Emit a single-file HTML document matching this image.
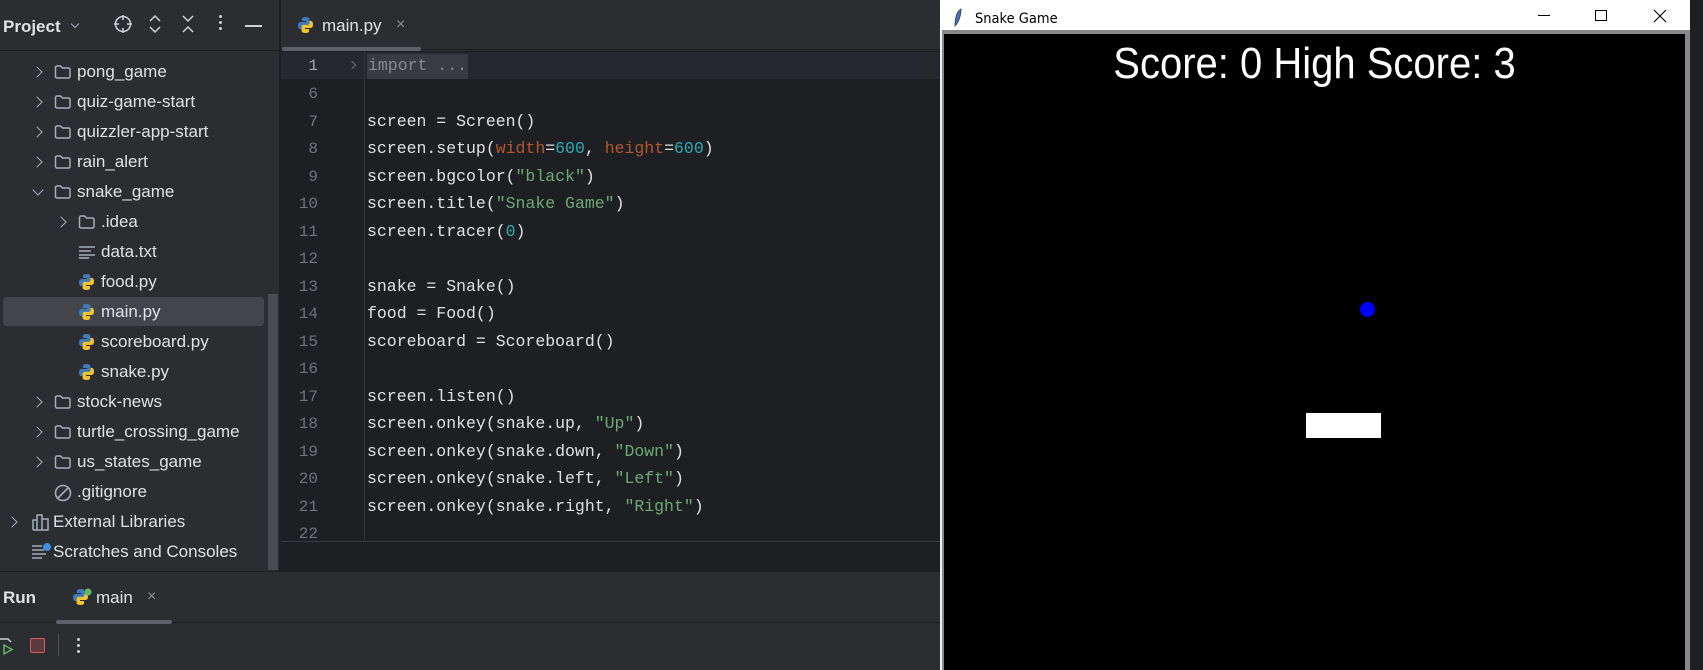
<!DOCTYPE html>
<html><head><meta charset="utf-8"><style>
*{margin:0;padding:0;box-sizing:border-box}
body{width:1703px;height:670px;overflow:hidden;background:#2b2d30;position:relative;font-family:"Liberation Sans",sans-serif;color:#dfe1e5}
.a{position:absolute}
.t{position:absolute;font-size:17px;white-space:nowrap;line-height:20px}
.mono{font-family:"Liberation Mono",monospace;font-size:16.5px;white-space:pre;position:absolute;line-height:20px}
.ln{position:absolute;width:50px;text-align:right;left:268px;font-family:"Liberation Mono",monospace;font-size:16px;color:#6f737a;line-height:20px}
.chev{position:absolute;width:8px;height:8px;border-right:1.6px solid #a8adbd;border-bottom:1.6px solid #a8adbd}
.r{transform:rotate(-45deg)}.d{transform:rotate(45deg)}
.fold{position:absolute;width:17px;height:15px}
.o{color:#cf8e6d}.s{color:#6aab73}.n{color:#2aacb8}.p{color:#b3572f}
</style></head><body>
<svg width="0" height="0" style="position:absolute"><defs>
<g id="py"><path d="M8.5 1C4.5 1 5 3 5 3v2h4v1H3.5S1 5.8 1 9.5s2.2 3.6 2.2 3.6H4.5v-1.8s-.1-2.2 2.2-2.2h3.6s2.1 0 2.1-2.1V3.1S12.7 1 8.5 1z" fill="#3e7bb8"/><path d="M8.5 17c4 0 3.5-2 3.5-2v-2H8v-1h5.5s2.5.2 2.5-3.5-2.2-3.6-2.2-3.6h-1.3v1.8s.1 2.2-2.2 2.2H6.7s-2.1 0-2.1 2.1v3.9S4.3 17 8.5 17z" fill="#f4c430"/></g>
<g id="fd"><path d="M1.5 3.5a1.5 1.5 0 0 1 1.5-1.5h3.5l2 2h6a1.5 1.5 0 0 1 1.5 1.5v7a1.5 1.5 0 0 1-1.5 1.5H3a1.5 1.5 0 0 1-1.5-1.5z" fill="none" stroke="#a8adbd" stroke-width="1.5"/></g>
</defs></svg>
<!-- sidebar -->
<div class="a" style="left:0;top:0;width:279px;height:572px;background:#2b2d30;border-bottom:1px solid #1e1f22"></div>
<div class="a" style="left:0;top:50px;width:279px;height:1px;background:#1e1f22"></div>
<div class="a" style="left:279px;top:0;width:2px;height:572px;background:#1e1f22"></div>
<div class="t" style="left:3px;top:17px;font-weight:bold;font-size:17px">Project</div>
<div class="chev d" style="left:72px;top:21px;width:6px;height:6px;border-width:1.3px"></div>
<svg class="a" style="left:113px;top:14px" width="20" height="20" viewBox="0 0 20 20" fill="none" stroke="#ced0d6" stroke-width="1.5"><circle cx="10" cy="10" r="7.5"/><path d="M10 1v5M10 14v5M1 10h5M14 10h5"/></svg>
<svg class="a" style="left:148px;top:14px" width="14" height="20" viewBox="0 0 14 20" fill="none" stroke="#ced0d6" stroke-width="1.5"><path d="M2 7l5-5 5 5M2 13l5 5 5-5"/></svg>
<svg class="a" style="left:181px;top:14px" width="14" height="20" viewBox="0 0 14 20" fill="none" stroke="#ced0d6" stroke-width="1.5"><path d="M2 2l5 5 5-5M2 18l5-5 5 5"/></svg>
<div class="a" style="left:219px;top:15px;width:3px;height:3px;background:#ced0d6;border-radius:2px;box-shadow:0 6px 0 #ced0d6,0 12px 0 #ced0d6"></div>
<div class="a" style="left:245px;top:25px;width:17px;height:1.6px;background:#ced0d6"></div>
<div class="a" style="left:3px;top:297px;width:261px;height:29px;background:#43454a;border-radius:4px"></div>
<div class="a" style="left:268px;top:294px;width:10px;height:276px;background:#4a4c51"></div>

<div class="chev r" style="left:33px;top:68px"></div><svg class="fold" style="left:54px;top:64px"><use href="#fd"/></svg><div class="t" style="left:77px;top:62px">pong_game</div>
<div class="chev r" style="left:33px;top:98px"></div><svg class="fold" style="left:54px;top:94px"><use href="#fd"/></svg><div class="t" style="left:77px;top:92px">quiz-game-start</div>
<div class="chev r" style="left:33px;top:128px"></div><svg class="fold" style="left:54px;top:124px"><use href="#fd"/></svg><div class="t" style="left:77px;top:122px">quizzler-app-start</div>
<div class="chev r" style="left:33px;top:158px"></div><svg class="fold" style="left:54px;top:154px"><use href="#fd"/></svg><div class="t" style="left:77px;top:152px">rain_alert</div>
<div class="chev d" style="left:34px;top:186px"></div><svg class="fold" style="left:54px;top:184px"><use href="#fd"/></svg><div class="t" style="left:77px;top:182px">snake_game</div>
<div class="chev r" style="left:57px;top:218px"></div><svg class="fold" style="left:78px;top:214px"><use href="#fd"/></svg><div class="t" style="left:101px;top:212px">.idea</div>
<svg class="a" style="left:79px;top:245px" width="17" height="14" stroke="#a8adbd" stroke-width="1.6"><path d="M0 2h16M0 6h12M0 10h16M0 13h10"/></svg><div class="t" style="left:101px;top:242px">data.txt</div>
<svg class="a" style="left:78px;top:273px" width="17" height="18"><use href="#py"/></svg><div class="t" style="left:101px;top:272px">food.py</div>
<svg class="a" style="left:78px;top:303px" width="17" height="18"><use href="#py"/></svg><div class="t" style="left:101px;top:302px">main.py</div>
<svg class="a" style="left:78px;top:333px" width="17" height="18"><use href="#py"/></svg><div class="t" style="left:101px;top:332px">scoreboard.py</div>
<svg class="a" style="left:78px;top:363px" width="17" height="18"><use href="#py"/></svg><div class="t" style="left:101px;top:362px">snake.py</div>
<div class="chev r" style="left:33px;top:398px"></div><svg class="fold" style="left:54px;top:394px"><use href="#fd"/></svg><div class="t" style="left:77px;top:392px">stock-news</div>
<div class="chev r" style="left:33px;top:428px"></div><svg class="fold" style="left:54px;top:424px"><use href="#fd"/></svg><div class="t" style="left:77px;top:422px">turtle_crossing_game</div>
<div class="chev r" style="left:33px;top:458px"></div><svg class="fold" style="left:54px;top:454px"><use href="#fd"/></svg><div class="t" style="left:77px;top:452px">us_states_game</div>
<svg class="a" style="left:54px;top:484px" width="18" height="18" fill="none" stroke="#a8adbd" stroke-width="1.6"><circle cx="9" cy="9" r="7.5"/><path d="M4 14L14 4"/></svg><div class="t" style="left:77px;top:482px">.gitignore</div>
<div class="chev r" style="left:8px;top:518px"></div>
<svg class="a" style="left:32px;top:513px" width="18" height="18" fill="none" stroke="#a8adbd" stroke-width="1.5"><path d="M1 17V7h4v10M5 17V2h5v15M10 17V6h6v11H1"/></svg><div class="t" style="left:53px;top:512px">External Libraries</div>
<svg class="a" style="left:32px;top:542px" width="20" height="18" fill="none" stroke="#a8adbd" stroke-width="1.5"><path d="M0 4h10M0 8h12M0 12h14M0 16h10"/><circle cx="15" cy="5" r="4" fill="#3d8ee6" stroke="none"/></svg><div class="t" style="left:53px;top:542px">Scratches and Consoles</div>

<!-- editor -->
<div class="a" style="left:281px;top:0;width:659px;height:50px;background:#2b2d30;border-bottom:1px solid #1e1f22"></div>
<svg class="a" style="left:297px;top:16px" width="17" height="18"><use href="#py"/></svg>
<div class="t" style="left:322px;top:16px;font-size:17px">main.py</div>
<div class="t" style="left:396px;top:15px;color:#8c8f94;font-size:16px">×</div>
<div class="a" style="left:282px;top:47px;width:139px;height:4px;background:#5d6067;border-radius:2px"></div>
<div class="a" style="left:281px;top:51px;width:659px;height:490px;background:#1e1f22"></div>
<div class="a" style="left:281px;top:52px;width:659px;height:27px;background:#26282e"></div>
<div class="a" style="left:364px;top:51px;width:1px;height:490px;background:#313438"></div>
<div class="a" style="left:281px;top:541px;width:659px;height:31px;background:#1e1f22;border-top:1px solid #393b40"></div>
<div class="a" style="left:367px;top:54px;width:101px;height:25px;background:#393b40"></div>
<div class="chev r" style="left:349px;top:62px;width:6px;height:6px;border-color:#6f737a"></div>
<div class="ln" style="top:56px;color:#a1a3ab">1</div><div class="mono" style="left:368px;top:56px;color:#868a91">import ...</div>
<div class="ln" style="top:84px">6</div>
<div class="ln" style="top:112px">7</div><div class="mono" style="left:367px;top:112px">screen = Screen()</div>
<div class="ln" style="top:139px">8</div><div class="mono" style="left:367px;top:139px">screen.setup(<span class="p">width</span>=<span class="n">600</span>, <span class="p">height</span>=<span class="n">600</span>)</div>
<div class="ln" style="top:167px">9</div><div class="mono" style="left:367px;top:167px">screen.bgcolor(<span class="s">"black"</span>)</div>
<div class="ln" style="top:194px">10</div><div class="mono" style="left:367px;top:194px">screen.title(<span class="s">"Snake Game"</span>)</div>
<div class="ln" style="top:222px">11</div><div class="mono" style="left:367px;top:222px">screen.tracer(<span class="n">0</span>)</div>
<div class="ln" style="top:249px">12</div>
<div class="ln" style="top:277px">13</div><div class="mono" style="left:367px;top:277px">snake = Snake()</div>
<div class="ln" style="top:304px">14</div><div class="mono" style="left:367px;top:304px">food = Food()</div>
<div class="ln" style="top:332px">15</div><div class="mono" style="left:367px;top:332px">scoreboard = Scoreboard()</div>
<div class="ln" style="top:359px">16</div>
<div class="ln" style="top:387px">17</div><div class="mono" style="left:367px;top:387px">screen.listen()</div>
<div class="ln" style="top:414px">18</div><div class="mono" style="left:367px;top:414px">screen.onkey(snake.up, <span class="s">"Up"</span>)</div>
<div class="ln" style="top:442px">19</div><div class="mono" style="left:367px;top:442px">screen.onkey(snake.down, <span class="s">"Down"</span>)</div>
<div class="ln" style="top:469px">20</div><div class="mono" style="left:367px;top:469px">screen.onkey(snake.left, <span class="s">"Left"</span>)</div>
<div class="ln" style="top:497px">21</div><div class="mono" style="left:367px;top:497px">screen.onkey(snake.right, <span class="s">"Right"</span>)</div>
<div class="ln" style="top:524px;height:17px;overflow:hidden">22</div>

<!-- bottom panel -->
<div class="a" style="left:0;top:572px;width:940px;height:98px;background:#2b2d30"></div>
<div class="a" style="left:0;top:622px;width:940px;height:1px;background:#1e1f22"></div>
<div class="t" style="left:3px;top:588px;font-weight:bold">Run</div>
<svg class="a" style="left:72px;top:588px" width="22" height="20"><use href="#py"/><circle cx="16" cy="4" r="3.5" fill="#5fb865"/></svg>
<div class="t" style="left:96px;top:588px">main</div>
<div class="t" style="left:147px;top:587px;color:#8c8f94;font-size:16px">×</div>
<div class="a" style="left:56px;top:620px;width:116px;height:4px;background:#5d6067;border-radius:2px"></div>
<svg class="a" style="left:0;top:636px" width="14" height="20" fill="none" stroke-width="1.5"><path d="M0 3h8l3 3" stroke="#ced0d6"/><path d="M4 9l8 4.5-8 4.5z" stroke="#5fb865"/></svg>
<div class="a" style="left:30px;top:638px;width:15px;height:15px;border:1.5px solid #db5c5c;background:#5a3a3a;border-radius:2px"></div>
<div class="a" style="left:58px;top:634px;width:1px;height:22px;background:#4e5157"></div>
<div class="a" style="left:77px;top:638px;width:3px;height:3px;background:#ced0d6;border-radius:2px;box-shadow:0 6px 0 #ced0d6,0 12px 0 #ced0d6"></div>

<!-- snake window -->
<div class="a" style="left:940px;top:0;width:750px;height:670px;background:#fff"></div>
<div class="a" style="left:940px;top:30px;width:750px;height:640px;background:#888"></div>
<div class="a" style="left:944px;top:34px;width:741px;height:636px;background:#000"></div>
<div class="a" style="left:940px;top:30px;width:2px;height:640px;background:#f0f0f0"></div>
<div class="a" style="left:1690px;top:0;width:13px;height:670px;background:#1e1f22"></div>
<svg class="a" style="left:953px;top:8px" width="10" height="20"><path d="M8 1C3 4 2 12 2 18c3-3 6-9 6-17z" fill="#4a6fb0" stroke="#2a3f70" stroke-width=".8"/></svg>
<div class="t" style="left:975px;top:9px;color:#000;font-size:14.5px;font-family:'DejaVu Sans Condensed','Liberation Sans Narrow',sans-serif">Snake Game</div>
<div class="a" style="left:1538px;top:15px;width:12px;height:1px;background:#000"></div>
<div class="a" style="left:1595px;top:10px;width:12px;height:11px;border:1.2px solid #000"></div>
<svg class="a" style="left:1653px;top:9px" width="14" height="14" stroke="#000" stroke-width="1.1"><path d="M1 1l12 12M13 1L1 13"/></svg>
<div class="a" style="left:944px;top:40px;width:741px;text-align:center;font-size:40px;color:#fff;line-height:48px;font-family:'Liberation Sans',sans-serif;transform:scaleY(1.08)">Score: 0 High Score: 3</div>
<div class="a" style="left:1360px;top:302px;width:15px;height:15px;border-radius:50%;background:#0000ff"></div>
<div class="a" style="left:1306px;top:413px;width:75px;height:25px;background:#fff"></div>
</body></html>
